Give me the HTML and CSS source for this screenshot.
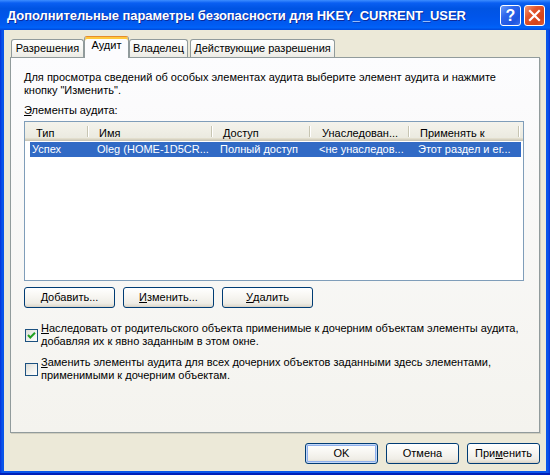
FILE: index.html
```html
<!DOCTYPE html>
<html>
<head>
<meta charset="utf-8">
<title>Дополнительные параметры безопасности</title>
<link rel="stylesheet" href="styles.css">
</head>
<body>
<div class="window">
  <div class="titlebar">
    <span class="title">Дополнительные параметры безопасности для HKEY_CURRENT_USER</span>
    <div class="caption-buttons">
      <div class="cap-btn help">?</div>
      <div class="cap-btn close">
        <svg width="19" height="19" viewBox="0 0 19 19"><path d="M5 5 L14 14 M14 5 L5 14" stroke="#fff" stroke-width="2.2" stroke-linecap="square"/></svg>
      </div>
    </div>
  </div>
  <div class="frame">
    <div class="client">
      <div class="tabs">
        <div class="tab t1">Разрешения</div>
        <div class="tab t2 active">Аудит</div>
        <div class="tab t3">Владелец</div>
        <div class="tab t4">Действующие разрешения</div>
      </div>
      <div class="panel">
        <p class="desc">Для просмотра сведений об особых элементах аудита выберите элемент аудита и нажмите<br>кнопку "Изменить".</p>
        <div class="label"><u>Э</u>лементы аудита:</div>
        <div class="listview">
          <div class="lv-header">
            <div class="hcell h1">Тип</div>
            <div class="hcell h2">Имя</div>
            <div class="hcell h3">Доступ</div>
            <div class="hcell h4">Унаследован...</div>
            <div class="hcell h5">Применять к</div>
          </div>
          <div class="lv-row selected">
            <div class="cell r1">Успех</div>
            <div class="cell r2">Oleg (HOME-1D5CR...</div>
            <div class="cell r3">Полный доступ</div>
            <div class="cell r4">&lt;не унаследов...</div>
            <div class="cell r5">Этот раздел и ег...</div>
          </div>
        </div>
        <div class="btn-row">
          <div class="btn w91"><u>Д</u>обавить...</div>
          <div class="btn w91"><u>И</u>зменить...</div>
          <div class="btn w91"><u>У</u>далить</div>
        </div>
        <div class="check-row first">
          <div class="checkbox checked">
            <svg width="11" height="11" viewBox="0 0 11 11"><path d="M2 5 L4.3 7.5 L9 2.8" fill="none" stroke="#21A121" stroke-width="2"/></svg>
          </div>
          <div class="check-text"><u>Н</u>аследовать от родительского объекта применимые к дочерним объектам элементы аудита,<br>добавляя их к явно заданным в этом окне.</div>
        </div>
        <div class="check-row second">
          <div class="checkbox"></div>
          <div class="check-text"><u>З</u>аменить элементы аудита для всех дочерних объектов заданными здесь элементами,<br>применимыми к дочерним объектам.</div>
        </div>
      </div>
      <div class="footer">
        <div class="btn w73 default">OK</div>
        <div class="btn w73">Отмена</div>
        <div class="btn w73">При<u>м</u>енить</div>
      </div>
    </div>
  </div>
</div>
</body>
</html>
```
FILE: styles.css
```css
* { box-sizing: border-box; }
html, body { margin: 0; padding: 0; }
body {
  width: 550px;
  height: 475px;
  overflow: hidden;
  background: #fff;
  font-family: "Liberation Sans", Arial, sans-serif;
  font-size: 11px;
  color: #000;
}
u { text-decoration: underline; text-underline-offset: 1px; }

.window {
  width: 550px;
  height: 475px;
  display: flex;
  flex-direction: column;
  background: #0A50E4;
}

.titlebar {
  flex: none;
  height: 30px;
  display: flex;
  align-items: center;
  padding: 0 5px 0 7px;
  background: linear-gradient(to bottom, #3D8DFF 0%, #0A5FF2 10%, #0054E3 28%, #0055EA 55%, #005BF2 82%, #0062F8 92%, #0049DB 100%);
}
.title {
  flex: 1;
  color: #fff;
  font-family: "Liberation Sans", Arial, sans-serif;
  font-weight: bold;
  font-size: 13px;
  letter-spacing: -0.07px;
  white-space: nowrap;
  text-shadow: 1px 1px 0 #0C2A9A;
  padding-top: 1px;
}
.caption-buttons {
  display: flex;
  gap: 3px;
  margin-top: 1px;
}
.cap-btn {
  width: 21px;
  height: 21px;
  border: 1px solid #fff;
  border-radius: 3px;
  display: flex;
  align-items: center;
  justify-content: center;
}
.help {
  background: linear-gradient(135deg, #6C9CF8 0%, #2E66EC 35%, #1E55E0 75%, #3C70EE 100%);
  color: #fff;
  font-family: "Liberation Sans", Arial, sans-serif;
  font-weight: bold;
  font-size: 16px;
  line-height: 1;
}
.close {
  background: linear-gradient(135deg, #F29A78 0%, #E2552C 35%, #D4431A 75%, #DE5E38 100%);
}

.frame {
  flex: 1;
  display: flex;
  padding: 0 4px 4px;
  background: linear-gradient(to right, #0831D9 0, #0A55EA 2px, #0A55EA calc(100% - 2px), #0831D9 100%);
  box-shadow: inset 0 -2px 0 #0020B8;
}
.client {
  flex: 1;
  display: flex;
  flex-direction: column;
  background: #ECE9D8;
  padding: 6px 6px 0;
}

.tabs {
  flex: none;
  height: 21px;
  display: flex;
  align-items: flex-end;
  padding-left: 1px;
  position: relative;
  z-index: 1;
}
.tab {
  height: 18px;
  border: 1px solid #919B9C;
  border-bottom: none;
  border-radius: 3px 3px 0 0;
  background: linear-gradient(to bottom, #FFFFFF 0%, #F7F7F4 50%, #ECEBE5 100%);
  display: flex;
  justify-content: center;
  align-items: flex-start;
  padding-top: 2px;
  line-height: 13px;
  white-space: nowrap;
}
.t1 { width: 73px; }
.t2 { width: 45px; }
.t3 { width: 59px; }
.t4 { width: 145px; margin-left: 2px; }
.tab.active {
  height: 22px;
  margin-bottom: -1px;
  background: #FCFCFE;
  border-top-color: #E68B2C;
  box-shadow: inset 0 2px 0 #FFC83C;
  padding-top: 2px;
}

.panel {
  flex: 1;
  border: 1px solid #919B9C;
  background: linear-gradient(to bottom, #FCFCFE 0%, #F4F3EE 100%);
  box-shadow: 1px 1px 0 #D0CEBF;
  padding: 13px 15px 0 13px;
  display: flex;
  flex-direction: column;
}
.desc {
  margin: 0 0 7px;
  line-height: 13px;
  white-space: nowrap;
}
.label {
  line-height: 13px;
}

.listview {
  margin-top: 4px;
  height: 160px;
  border: 1px solid #7F9DB9;
  background: #fff;
}
.lv-header {
  display: flex;
  height: 19px;
  background: linear-gradient(to bottom, #F4F3EC 0, #EBEAE0 calc(100% - 3px), #E2DECD calc(100% - 3px), #E2DECD calc(100% - 2px), #D6D2C2 calc(100% - 2px), #D6D2C2 calc(100% - 1px), #CBC7B8 calc(100% - 1px));
}
.hcell {
  line-height: 13px;
  padding-top: 5px;
  padding-left: 10px;
  white-space: nowrap;
  overflow: hidden;
  background:
    linear-gradient(#C7C5B2, #C7C5B2) no-repeat right 1px top 4px / 1px 11px,
    linear-gradient(#FFFFFF, #FFFFFF) no-repeat right 0 top 4px / 1px 11px;
}
.h1 { width: 64px; padding-left: 11px; }
.h2 { width: 124px; }
.h3 { width: 98px; }
.h4 { width: 99px; padding-left: 11px; }
.h5 { width: 110px; }

.lv-row {
  display: flex;
  margin: 1px 0 0 5px;
  width: 491px;
  height: 15px;
  line-height: 15px;
}
.lv-row.selected {
  background: #316AC5;
  color: #fff;
}
.cell {
  white-space: nowrap;
  overflow: hidden;
  padding-left: 8px;
}
.r1 { width: 59px; padding-left: 2px; }
.r2 { width: 124px; }
.r3 { width: 98px; padding-left: 7px; }
.r4 { width: 99px; }
.r5 { width: 111px; }

.btn-row {
  display: flex;
  gap: 8px;
  margin-top: 6px;
}
.btn {
  height: 21px;
  border: 1px solid #003C74;
  border-radius: 3px;
  background: linear-gradient(to bottom, #FFFFFF 0%, #F8F7F3 40%, #EFEDE6 80%, #E3DFD4 92%, #D6D0C5 100%);
  display: flex;
  align-items: center;
  justify-content: center;
  line-height: 13px;
  white-space: nowrap;
}
.w91 { width: 91px; }
.w73 { width: 73px; }
.btn.default {
  box-shadow: inset 0 0 0 1px #C4D8F8, inset 0 0 0 2px #8FB0EC;
}

.check-row {
  display: flex;
  align-items: center;
}
.check-row.first { margin-top: 14px; }
.check-row.second { margin-top: 8px; }
.checkbox {
  flex: none;
  width: 13px;
  height: 13px;
  margin: 0 3px 0 1px;
  border: 1px solid #1C5180;
  background: linear-gradient(135deg, #DCDCD7 0%, #F0F0EC 50%, #FFFFFF 100%);
  display: flex;
  align-items: center;
  justify-content: center;
}
.check-text {
  line-height: 13px;
  white-space: nowrap;
}

.footer {
  flex: none;
  display: flex;
  justify-content: flex-end;
  gap: 8px;
  padding: 10px 0 7px;
}
```
